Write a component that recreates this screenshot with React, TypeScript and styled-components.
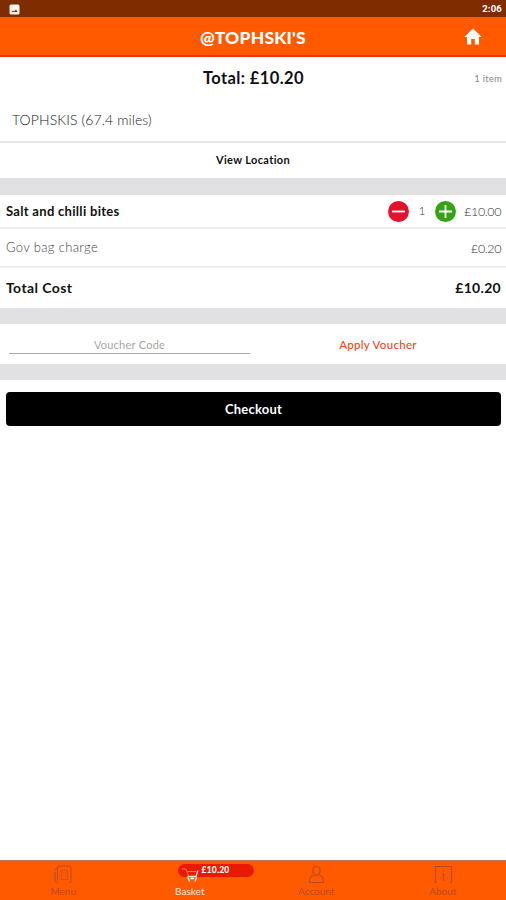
import React from "react";
import styled, { createGlobalStyle } from "styled-components";

const Global = createGlobalStyle`
  * { box-sizing: border-box; }
  body { margin: 0; background: #fff; font-family: Lato, "Open Sans", sans-serif; color: #111; }
  button, input { font: inherit; border: 0; background: none; padding: 0; margin: 0; }
`;

const Screen = styled.div`
  width: 506px;
  height: 900px;
  display: flex;
  flex-direction: column;
  overflow: hidden;
  background: #fff;
`;

const StatusBar = styled.div`
  flex: none;
  height: 17px;
  display: flex;
  align-items: center;
  justify-content: space-between;
  padding: 1px 4px 0 9px;
  background: #7f2c00;
  svg { display: block; }
`;

const Header = styled.header`
  flex: none;
  height: 40px;
  display: grid;
  grid-template-columns: 1fr auto 1fr;
  align-items: center;
  padding-top: 2px;
  background: #ff5a00;
  border-bottom: 2px solid #f53108;
`;

const HomeButton = styled.button`
  justify-self: end;
  margin-right: 23px;
  height: 20px;
  svg { display: block; }
`;

type TextProps = { $size: number; $weight?: number; $color?: string; $spacing?: number; $family?: string };
const Label = styled.span<TextProps>`
  display: block;
  font-size: ${(p) => p.$size}px;
  font-weight: ${(p) => p.$weight ?? 400};
  color: ${(p) => p.$color ?? "#111"};
  letter-spacing: ${(p) => p.$spacing ?? 0}px;
  ${(p) => p.$family && `font-family: "${p.$family}", sans-serif;`}
  line-height: 1.2;
  white-space: nowrap;
`;

const TotalRow = styled.div`
  flex: none;
  height: 42px;
  display: grid;
  grid-template-columns: 1fr auto 1fr;
  align-items: center;
  padding: 2px 4px 0 5px;
  & > :last-child { justify-self: end; }
`;

const Location = styled.div`
  flex: none;
  height: 44px;
  display: flex;
  align-items: center;
  padding: 1px 12px 0;
  border-bottom: 2px solid #e6e6e6;
`;

const LocationButton = styled.button`
  flex: none;
  height: 35px;
  display: flex;
  align-items: center;
  justify-content: center;
  padding-bottom: 1px;
`;

const Divider = styled.div<{ $height: number }>`
  flex: none;
  height: ${(p) => p.$height}px;
  background: #e1e1e3;
`;

const Row = styled.div<{ $height: number; $last?: boolean }>`
  flex: none;
  height: ${(p) => p.$height}px;
  display: flex;
  align-items: center;
  justify-content: space-between;
  padding: ${(p) => (p.$last ? 0 : 1)}px 5px 0 6px;
  border-bottom: ${(p) => (p.$last ? "0" : "2px solid #eeeeee")};
`;

const Quantity = styled.div`
  display: flex;
  align-items: center;
`;

const Round = styled.button<{ $color: string }>`
  width: 21px;
  height: 21px;
  border-radius: 50%;
  background: ${(p) => p.$color};
  svg { display: block; }
`;

const Count = styled.div`
  width: 26px;
  text-align: center;
`;

const Price = styled.div`
  width: 45px;
  text-align: right;
`;

const VoucherRow = styled.div`
  flex: none;
  height: 40px;
  display: grid;
  grid-template-columns: 1fr 1fr;
`;

const VoucherInput = styled.input`
  height: 20px;
  margin: 10px 3px 0 9px;
  min-width: 0;
  border-bottom: 1px solid #aaa;
  text-align: center;
  font-size: 11px;
  letter-spacing: 0.25px;
  padding-top: 2px;
  &::placeholder { color: #a6a6a6; opacity: 1; }
`;

const ApplyButton = styled.button`
  display: flex;
  align-items: center;
  justify-content: center;
  padding-right: 3px;
  padding-top: 1px;
`;

const Checkout = styled.button`
  flex: none;
  height: 34px;
  display: flex;
  align-items: center;
  justify-content: center;
  margin: 12px 5px 0 6px;
  padding-top: 1px;
  border-radius: 4px;
  background: #000;
`;

const Nav = styled.nav`
  flex: none;
  height: 40px;
  margin-top: auto;
  display: grid;
  grid-template-columns: repeat(4, 1fr);
  border-top: 1px solid #b07860;
  background: #ff5a00;
`;

const Tab = styled.div`
  position: relative;
  display: flex;
  flex-direction: column;
  align-items: center;
  padding-top: 3px;
  svg { display: block; position: relative; z-index: 1; }
`;

const Badge = styled.div`
  position: absolute;
  left: 51px;
  top: 3px;
  width: 76px;
  height: 13px;
  border-radius: 7px;
  background: #ea1a00;
  display: flex;
  align-items: center;
  justify-content: center;
`;

const tabColor = "#b94b20";

const MenuIcon = () => (
  <svg width="20" height="21" viewBox="0 0 20 21" fill="none" stroke={tabColor} strokeWidth="1">
    <path d="M4.500 17V4Q4.500 2 6.500 2H16.500Q18 2 18 4V18.500H16M4.500 4.500H3.500Q2.500 4.500 2.500 6M2 8V17.500Q2 18.500 3.500 18.500H5" />
    <path d="M8 6.500H14.500V15.500H8Z" opacity=".6" />
    <path d="M9 9H13.500M9 12H13.500" opacity=".45" />
  </svg>
);

const CartIcon = () => (
  <svg width="24" height="21" viewBox="0 0 24 21" fill="none">
    <path d="M4 5H8L10.500 12M18.500 7.500H9" stroke="#ff7462" strokeWidth="1" />
    <path d="M20 6.500L18 12.500H9.500" stroke="#ffe6dc" strokeWidth="1.300" />
    <path d="M10 13.500L11.500 17.500M18.500 13.500L17 17.500M12.500 14.500H16" stroke="#fff" strokeWidth="1.400" />
  </svg>
);

const PersonIcon = () => (
  <svg width="20" height="21" viewBox="0 0 20 21" fill="none" stroke={tabColor} strokeWidth="1.200">
    <path d="M7 8V6A3.500 3.500 0 0 1 14 6V8Q13.500 11 10.500 11.500Q7.500 11 7 8Z" />
    <path d="M7.500 11Q3.500 12 3.500 18.500H17.500Q17.500 12 13.500 11" />
  </svg>
);

const AboutIcon = () => (
  <svg width="20" height="21" viewBox="0 0 20 21" fill="none" stroke={tabColor} strokeWidth="1.200">
    <path d="M4 18.500H2.500V2.500H18.500V18.500H17M10.500 6V7.500M9 10H10.500V17" />
  </svg>
);

export default function App() {
  return (
    <Screen>
      <Global />
      <StatusBar>
        <svg width="11" height="11" viewBox="0 0 11 11">
          <rect x=".5" y=".5" width="10" height="10" rx="1.500" fill="#fff4f0" />
          <path d="M2.500 8L4 6.500L5 7.500L7 5.500L8.500 8Z" fill="#7f2c00" />
        </svg>
        <Label $size={9.5} $weight={700} $color="#fff" $spacing={0.2} $family="Roboto">2:06</Label>
      </StatusBar>
      <Header>
        <span />
        <Label $size={17.5} $weight={900} $color="#fff" $spacing={0.2}>@TOPHSKI'S</Label>
        <HomeButton aria-label="Home">
          <svg width="20" height="20" viewBox="0 0 20 20">
            <path d="M10 1.500L18.700 10H16V17.500H11.800V12H8.200V17.500H4V10H1.300Z" fill="#fff" />
          </svg>
        </HomeButton>
      </Header>
      <TotalRow>
        <span />
        <Label $size={16.5} $weight={700} $spacing={0.4}>Total: £10.20</Label>
        <Label $size={9.5} $color="#888" $spacing={0.2}>1 item</Label>
      </TotalRow>
      <Location>
        <Label $size={14} $weight={300} $color="#222" $spacing={0.1}>TOPHSKIS (67.4 miles)</Label>
      </Location>
      <LocationButton>
        <Label $size={11} $weight={700} $spacing={0.35}>View Location</Label>
      </LocationButton>
      <Divider $height={17} />
      <Row $height={34}>
        <Label $size={13} $weight={700} $spacing={0.3}>Salt and chilli bites</Label>
        <Quantity>
          <Round $color="#e5122d" aria-label="Remove one">
            <svg width="21" height="21" viewBox="0 0 21 21"><path d="M4 10.500H17" stroke="#fff" strokeWidth="1.800" /></svg>
          </Round>
          <Count><Label $size={12} $weight={300} $color="#333">1</Label></Count>
          <Round $color="#36a315" aria-label="Add one">
            <svg width="21" height="21" viewBox="0 0 21 21"><path d="M4 10.500H17M10.500 4V17" stroke="#fff" strokeWidth="1.800" /></svg>
          </Round>
          <Price><Label $size={12.5} $weight={300} $color="#333" $spacing={-0.4}>£10.00</Label></Price>
        </Quantity>
      </Row>
      <Row $height={39}>
        <Label $size={13} $weight={300} $color="#444" $spacing={0.35}>Gov bag charge</Label>
        <Label $size={12.5} $weight={300} $color="#333" $spacing={-0.4}>£0.20</Label>
      </Row>
      <Row $height={40} $last>
        <Label $size={14} $weight={700} $spacing={0.4}>Total Cost</Label>
        <Label $size={14} $weight={700} $spacing={0.3}>£10.20</Label>
      </Row>
      <Divider $height={16} />
      <VoucherRow>
        <VoucherInput placeholder="Voucher Code" />
        <ApplyButton><Label $size={11.5} $weight={500} $color="#f4481c" $spacing={0.3}>Apply Voucher</Label></ApplyButton>
      </VoucherRow>
      <Divider $height={16} />
      <Checkout><Label $size={13} $weight={700} $color="#fff" $spacing={0.2}>Checkout</Label></Checkout>
      <Nav>
        <Tab><MenuIcon /><Label $size={10} $color={tabColor}>Menu</Label></Tab>
        <Tab>
          <Badge><Label $size={8.5} $weight={900} $color="#fff" $spacing={0.2}>£10.20</Label></Badge>
          <CartIcon />
          <Label $size={10} $weight={500} $color="#ffe2d4">Basket</Label>
        </Tab>
        <Tab><PersonIcon /><Label $size={10} $color={tabColor}>Account</Label></Tab>
        <Tab><AboutIcon /><Label $size={10} $color={tabColor}>About</Label></Tab>
      </Nav>
    </Screen>
  );
}
